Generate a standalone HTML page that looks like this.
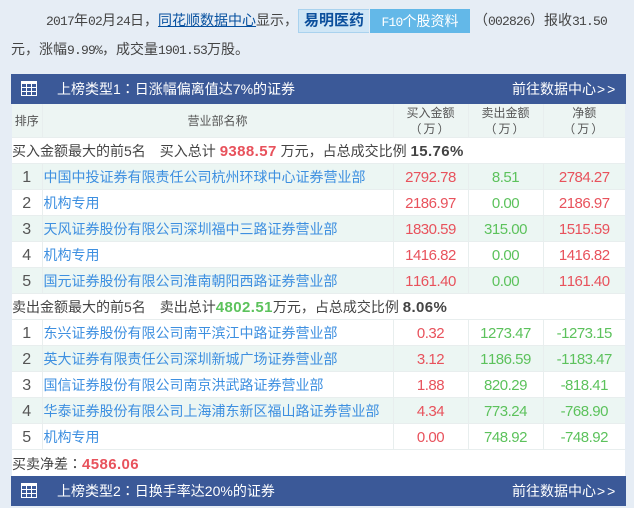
<!DOCTYPE html>
<html><head><meta charset="utf-8">
<style>
html,body{margin:0;padding:0;width:634px;height:508px;overflow:hidden;background:#e6edf5;font-family:"Liberation Sans","Noto Sans CJK SC",sans-serif;color:#444;font-size:14px}
.abs{position:absolute;white-space:nowrap}
.intro{font-family:"Liberation Sans","Noto Sans CJK SC",sans-serif;color:#444;line-height:20px;font-size:14px}
.m{font-family:"Liberation Mono",monospace;font-size:13px;letter-spacing:-.8px}
.bar{position:absolute;left:11px;width:615px;height:30px;background:#3b5998;color:#fff;line-height:30px}
.bar svg{position:absolute;left:10px;top:7px}
.bar .t{position:absolute;left:46px;top:0;white-space:nowrap}
.bar .r{position:absolute;left:501px;top:0;white-space:nowrap}
.gt{letter-spacing:2px;margin-left:1px}
.col{font-family:"Liberation Sans","Noto Sans CJK TC",sans-serif}
table{position:absolute;left:12px;top:104px;width:613px;border-collapse:collapse;table-layout:fixed;background:#fff}
td{padding:2px 0 0;border-bottom:1px solid #e8eeee;border-right:1px solid #e8eeee;text-align:center;white-space:nowrap;overflow:hidden;line-height:23px}
td:last-child{border-right:none}
tr.h td{background:#edf5f3;font-size:12px;line-height:16px;height:33px;padding:0;color:#555}
tr.s td{text-align:left;height:23px;color:#444;border-right:none}
tr.r td{height:23px}
tr.a td{background:#ecf6f3}
td.k{font-size:16px;color:#555}
td.n{text-align:left;color:#3d8fe0;padding-left:1px}
td.v{font-size:15px;letter-spacing:-.5px;font-kerning:none}
.re{color:#e8525c}.g{color:#5cc25c}
.p{letter-spacing:2px}
b{font-weight:bold;font-size:15px;letter-spacing:.4px}
.gap{display:inline-block;width:14px}
</style></head><body>
<div class="abs intro" style="left:46px;top:10px"><span class="m">2017</span>年<span class="m">02</span>月<span class="m">24</span>日，<span style="color:#06509f;text-decoration:underline">同花顺数据中心</span>显示，</div>
<div class="abs" style="left:298px;top:9px;width:71px;height:24px;background:#cfe6f6;border:1px solid #a9d2ee;box-sizing:border-box;border-right:none;color:#0b4f9c;font-weight:bold;font-size:15px;line-height:22px;text-align:center">易明医药</div>
<div class="abs intro" style="left:370px;top:9px;width:100px;height:24px;background:#63b8e8;color:#fff;line-height:24px;text-align:center"><span class="m">F10</span>个股资料</div>
<div class="abs intro" style="left:474px;top:10px">（<span class="m">002826</span>）报收<span class="m">31.50</span></div>
<div class="abs intro" style="left:11px;top:39px">元，涨幅<span class="m">9.99%</span>，成交量<span class="m">1901.53</span>万股。</div>

<div class="bar" style="top:74px">
<svg width="16" height="15" viewBox="0 0 16 15"><rect x="0" y="0" width="16" height="15" fill="#fff"/><g fill="#3b5998"><rect x="1" y="3" width="4" height="3"/><rect x="6" y="3" width="4" height="3"/><rect x="11" y="3" width="4" height="3"/><rect x="1" y="7" width="4" height="3"/><rect x="6" y="7" width="4" height="3"/><rect x="11" y="7" width="4" height="3"/><rect x="1" y="11" width="4" height="3"/><rect x="6" y="11" width="4" height="3"/><rect x="11" y="11" width="4" height="3"/></g></svg>
<span class="t">上榜类型1<span class="col">：</span>日涨幅偏离值达7%的证券</span><span class="r">前往数据中心<span class="gt">&gt;&gt;</span></span></div>

<table>
<colgroup><col style="width:30px"><col style="width:351px"><col style="width:75px"><col style="width:75px"><col style="width:82px"></colgroup>
<tr class="h"><td>排序</td><td>营业部名称</td><td>买入金额<br><span class="p">（万）</span></td><td>卖出金额<br><span class="p">（万）</span></td><td>净额<br><span class="p">（万）</span></td></tr>
<tr class="s"><td colspan="5">买入金额最大的前5名<span class="gap"></span>买入总计 <b class="re">9388.57</b> 万元，占总成交比例 <b>15.76%</b></td></tr>
<tr class="r a"><td class="k">1</td><td class="n">中国中投证券有限责任公司杭州环球中心证券营业部</td><td class="v re">2792.78</td><td class="v g">8.51</td><td class="v re">2784.27</td></tr>
<tr class="r"><td class="k">2</td><td class="n">机构专用</td><td class="v re">2186.97</td><td class="v g">0.00</td><td class="v re">2186.97</td></tr>
<tr class="r a"><td class="k">3</td><td class="n">天风证券股份有限公司深圳福中三路证券营业部</td><td class="v re">1830.59</td><td class="v g">315.00</td><td class="v re">1515.59</td></tr>
<tr class="r"><td class="k">4</td><td class="n">机构专用</td><td class="v re">1416.82</td><td class="v g">0.00</td><td class="v re">1416.82</td></tr>
<tr class="r a"><td class="k">5</td><td class="n">国元证券股份有限公司淮南朝阳西路证券营业部</td><td class="v re">1161.40</td><td class="v g">0.00</td><td class="v re">1161.40</td></tr>
<tr class="s"><td colspan="5">卖出金额最大的前5名<span class="gap"></span>卖出总计<b class="g">4802.51</b>万元，占总成交比例 <b>8.06%</b></td></tr>
<tr class="r"><td class="k">1</td><td class="n">东兴证券股份有限公司南平滨江中路证券营业部</td><td class="v re">0.32</td><td class="v g">1273.47</td><td class="v g">-1273.15</td></tr>
<tr class="r a"><td class="k">2</td><td class="n">英大证券有限责任公司深圳新城广场证券营业部</td><td class="v re">3.12</td><td class="v g">1186.59</td><td class="v g">-1183.47</td></tr>
<tr class="r"><td class="k">3</td><td class="n">国信证券股份有限公司南京洪武路证券营业部</td><td class="v re">1.88</td><td class="v g">820.29</td><td class="v g">-818.41</td></tr>
<tr class="r a"><td class="k">4</td><td class="n">华泰证券股份有限公司上海浦东新区福山路证券营业部</td><td class="v re">4.34</td><td class="v g">773.24</td><td class="v g">-768.90</td></tr>
<tr class="r"><td class="k">5</td><td class="n">机构专用</td><td class="v re">0.00</td><td class="v g">748.92</td><td class="v g">-748.92</td></tr>
<tr class="s"><td colspan="5" style="border-bottom:none;height:24px">买卖净差<span class="col">：</span><b class="re">4586.06</b></td></tr>
</table>

<div class="bar" style="top:476px">
<svg width="16" height="15" viewBox="0 0 16 15"><rect x="0" y="0" width="16" height="15" fill="#fff"/><g fill="#3b5998"><rect x="1" y="3" width="4" height="3"/><rect x="6" y="3" width="4" height="3"/><rect x="11" y="3" width="4" height="3"/><rect x="1" y="7" width="4" height="3"/><rect x="6" y="7" width="4" height="3"/><rect x="11" y="7" width="4" height="3"/><rect x="1" y="11" width="4" height="3"/><rect x="6" y="11" width="4" height="3"/><rect x="11" y="11" width="4" height="3"/></g></svg>
<span class="t">上榜类型2<span class="col">：</span>日换手率达20%的证券</span><span class="r">前往数据中心<span class="gt">&gt;&gt;</span></span></div>
</body></html>
